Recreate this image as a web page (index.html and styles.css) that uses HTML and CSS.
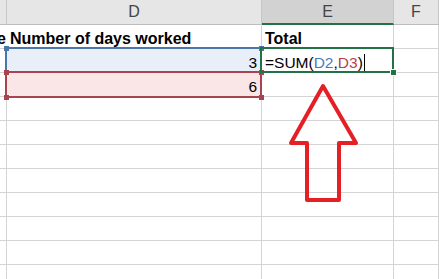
FILE: index.html
```html
<!DOCTYPE html>
<html lang="en">
<head>
    <meta charset="UTF-8">
    <meta name="viewport" content="width=device-width, initial-scale=1.0">
    <title>Total formula</title>
    <link rel="stylesheet" href="styles.css">
</head>
<body>
    <div class="sheet">
        <div class="grid">
            <div class="hd"></div>
            <div class="hd">D</div>
            <div class="hd hd-active">E</div>
            <div class="hd">F</div>

            <div class="cell spill bold">e</div>
            <div class="cell bold">Number of days worked</div>
            <div class="cell bold">Total</div>
            <div class="cell"></div>

            <div class="cell"></div>
            <div class="cell num ref-blue">3</div>
            <div class="cell formula">=SUM(<span class="c-blue">D2</span>,<span class="c-red">D3</span>)<span class="caret"></span></div>
            <div class="cell"></div>

            <div class="cell"></div>
            <div class="cell num ref-red">6</div>
            <div class="cell"></div>
            <div class="cell"></div>

            <div class="cell"></div><div class="cell"></div><div class="cell"></div><div class="cell"></div>
            <div class="cell"></div><div class="cell"></div><div class="cell"></div><div class="cell"></div>
            <div class="cell"></div><div class="cell"></div><div class="cell"></div><div class="cell"></div>
            <div class="cell"></div><div class="cell"></div><div class="cell"></div><div class="cell"></div>
            <div class="cell"></div><div class="cell"></div><div class="cell"></div><div class="cell"></div>
            <div class="cell"></div><div class="cell"></div><div class="cell"></div><div class="cell"></div>
            <div class="cell"></div><div class="cell"></div><div class="cell"></div><div class="cell"></div>
            <div class="cell"></div><div class="cell"></div><div class="cell"></div><div class="cell"></div>
        </div>

        <!-- range highlights drawn over the grid -->
        <div class="range range-blue"></div>
        <div class="range range-red"></div>
        <div class="dot dot-blue" style="left: 4px; top: 46px;"></div>
        <div class="dot dot-blue" style="left: 259px; top: 46px;"></div>
        <div class="dot dot-red" style="left: 4px; top: 70px;"></div>
        <div class="dot dot-red" style="left: 259px; top: 70px;"></div>
        <div class="dot dot-red" style="left: 4px; top: 95px;"></div>
        <div class="dot dot-red" style="left: 259px; top: 95px;"></div>
        <div class="active-cell"></div>
        <div class="fill-handle"></div>

        <svg class="arrow" width="439" height="279" viewBox="0 0 439 279">
            <polygon points="323,86 356,143 339,143 339,200 307,200 307,143 291,143"
                     fill="none" stroke="#e41f26" stroke-width="4" stroke-linejoin="round"/>
        </svg>
    </div>
</body>
</html>
```

FILE: styles.css
```css
body {
    margin: 0;
    padding: 0;
    overflow: hidden;
    background: #fff;
    font-family: "Liberation Sans", Arial, sans-serif;
}

.sheet {
    position: relative;
    width: 439px;
    height: 279px;
    overflow: hidden;
}

.grid {
    display: grid;
    grid-template-columns: 7px 255px 132px 1fr;
    grid-template-rows: 25px;
    grid-auto-rows: 24px;
}

.hd {
    box-sizing: border-box;
    background: #e6e6e6;
    border-right: 1px solid #c6c6c6;
    border-bottom: 1px solid #bdbdbd;
    color: #444;
    font-size: 16px;
    line-height: 24px;
    text-align: center;
}

.hd-active {
    background: #d2d2d2;
    border-bottom: 2px solid #217346;
}

.cell {
    box-sizing: border-box;
    border-right: 1px solid #d4d4d4;
    border-bottom: 1px solid #d4d4d4;
    font-size: 15.5px;
    line-height: 21px;
    padding: 3px 3px 0;
    color: #000;
    white-space: nowrap;
}

.bold {
    font-weight: bold;
    font-size: 16px;
}

.spill {
    padding: 3px 0 0;
    direction: rtl;
    overflow: visible;
    border-right-color: transparent;
}

.num {
    text-align: right;
    padding-right: 4px;
}

.ref-blue {
    background: #e9eff8;
}

.ref-red {
    background: #fbe6e7;
}

.formula {
    padding-left: 3px;
}

.c-blue {
    color: #4a7ebb;
}

.c-red {
    color: #b8404f;
}

.caret {
    display: inline-block;
    width: 1px;
    height: 18px;
    background: #000;
    margin-left: 1px;
    vertical-align: -4px;
}

.range {
    position: absolute;
    box-sizing: border-box;
    left: 5px;
    width: 257px;
    border: 2px solid;
}

.range-blue {
    top: 47px;
    height: 26px;
    border-color: #4a76a8;
}

.range-red {
    top: 71px;
    height: 27px;
    border-color: #a9434f;
}

.dot {
    position: absolute;
    width: 5px;
    height: 5px;
}

.dot-blue {
    background: #4a76a8;
}

.dot-red {
    background: #a9434f;
}

.active-cell {
    position: absolute;
    box-sizing: border-box;
    left: 260px;
    top: 47px;
    width: 134px;
    height: 26px;
    border: 2px solid #217346;
}

.fill-handle {
    position: absolute;
    left: 390px;
    top: 69px;
    width: 5px;
    height: 5px;
    background: #217346;
    border: 1px solid #fff;
}

.arrow {
    position: absolute;
    left: 0;
    top: 0;
}
```
